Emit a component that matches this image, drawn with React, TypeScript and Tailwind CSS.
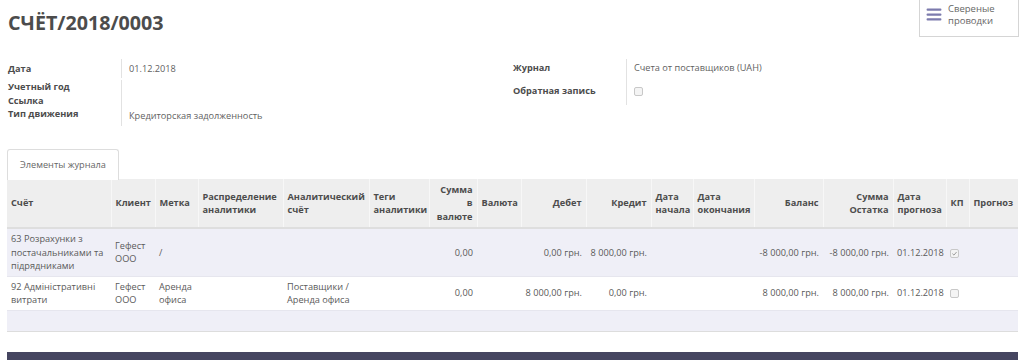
import React from 'react';

type Col = { label: string; width: number; align?: 'right' | 'left' };

const columns: Col[] = [
  { label: 'Счёт', width: 104 },
  { label: 'Клиент', width: 44 },
  { label: 'Метка', width: 43 },
  { label: 'Распределение аналитики', width: 85 },
  { label: 'Аналитический счёт', width: 86 },
  { label: 'Теги аналитики', width: 60 },
  { label: 'Сумма в валюте', width: 48, align: 'right' },
  { label: 'Валюта', width: 44 },
  { label: 'Дебет', width: 65, align: 'right' },
  { label: 'Кредит', width: 65, align: 'right' },
  { label: 'Дата начала', width: 42 },
  { label: 'Дата окончания', width: 61 },
  { label: 'Баланс', width: 69, align: 'right' },
  { label: 'Сумма Остатка', width: 70, align: 'right' },
  { label: 'Дата прогноза', width: 53 },
  { label: 'КП', width: 23 },
  { label: 'Прогноз', width: 49 },
];

type Line = (string | { check: boolean })[];

const rows: Line[] = [
  [
    '63 Розрахунки з постачальниками та підрядниками',
    'Гефест ООО',
    '/',
    '',
    '',
    '',
    '0,00',
    '',
    '0,00 грн.',
    '8 000,00 грн.',
    '',
    '',
    '-8 000,00 грн.',
    '-8 000,00 грн.',
    '01.12.2018',
    { check: true },
    '',
  ],
  [
    '92 Адміністративні витрати',
    'Гефест ООО',
    'Аренда офиса',
    '',
    'Поставщики / Аренда офиса',
    '',
    '0,00',
    '',
    '8 000,00 грн.',
    '0,00 грн.',
    '',
    '',
    '8 000,00 грн.',
    '8 000,00 грн.',
    '01.12.2018',
    { check: false },
    '',
  ],
];

const Checkbox: React.FC<{ checked?: boolean }> = ({ checked }) => (
  <span className="inline-flex h-[9px] w-[9px] items-center justify-center rounded-[2px] border border-[#c8c8c8] bg-[#f4f4f4] align-middle">
    {checked && (
      <svg viewBox="0 0 10 10" className="h-[7px] w-[7px]">
        <path d="M2 5.2 L4.2 7.3 L8 2.8" fill="none" stroke="#9a9a9a" strokeWidth="1.4" />
      </svg>
    )}
  </span>
);

const FieldRow: React.FC<{ label: string; value?: React.ReactNode; className?: string }> = ({
  label,
  value,
  className,
}) => (
  <div className={`flex items-center ${className ?? ''}`}>
    <div className="w-[113px] shrink-0 font-bold text-[#4c4c4c]">{label}</div>
    <div className="flex flex-1 items-center self-stretch border-l border-[#e2e2e2] pl-[7px] text-[#5f5f5f]">
      {value}
    </div>
  </div>
);

export default function App() {
  return (
    <div
      className="relative h-[360px] w-[1024px] overflow-hidden bg-white text-[9.2px] leading-[13.5px] text-[#4c4c4c]"
      style={{ fontFamily: '"Open Sans", "Noto Sans", sans-serif' }}
    >
      <button className="absolute right-[5px] top-[-1px] flex h-[38px] w-[100px] items-start gap-[6px] border border-[#d5d5d5] bg-white pl-[6px] pt-[3px] text-left">
        <svg viewBox="0 0 16 14" className="mt-[5px] h-[13px] w-[16px] shrink-0">
          <rect x="0" y="0.5" width="16" height="2.5" rx="1" fill="#7c7bad" />
          <rect x="0" y="5.8" width="16" height="2.5" rx="1" fill="#7c7bad" />
          <rect x="0" y="11" width="16" height="2.5" rx="1" fill="#7c7bad" />
        </svg>
        <span className="flex flex-col text-[9.5px] leading-[11.5px] text-[#666666]">
          <span>Свереные</span>
          <span>проводки</span>
        </span>
      </button>

      <div className="px-[7px]">
        <h1 className="pl-[1px] pt-[9px] text-[19.7px] font-bold leading-[27px] text-[#4c4c4c]">
          СЧЁТ/2018/0003
        </h1>

        <div className="mt-[23px] flex">
          <div className="w-[506px] pl-[1px]">
            <FieldRow label="Дата" value="01.12.2018" className="h-[19px]" />
            <FieldRow label="Учетный год" className="mt-[2px] h-[13.5px]" />
            <FieldRow label="Ссылка" className="h-[13.5px]" />
            <div className="flex h-[19px]">
              <div className="w-[113px] shrink-0 font-bold text-[#4c4c4c]">Тип движения</div>
              <div className="flex-1 border-l border-[#e2e2e2] pl-[7px] pt-[2px] text-[#5f5f5f]">
                Кредиторская задолженность
              </div>
            </div>
          </div>
          <div className="flex-1">
            <FieldRow label="Журнал" value="Счета от поставщиков (UAH)" className="h-[18px]" />
            <FieldRow label="Обратная запись" value={<Checkbox />} className="h-[28px]" />
          </div>
        </div>

        <div className="mt-[23px] flex">
          <div className="relative z-10 mb-[-1px] flex h-[31px] items-center rounded-t-[3px] border border-b-0 border-[#dddddd] bg-white px-[12px] text-[#666666]">
            Элементы журнала
          </div>
        </div>

        <table className="w-[1011px] table-fixed border-collapse">
          <colgroup>
            {columns.map((c) => (
              <col key={c.label} style={{ width: c.width }} />
            ))}
          </colgroup>
          <thead>
            <tr className="h-[49px] border-b-2 border-[#dedede] bg-[#eeeeee]">
              {columns.map((c, i) => (
                <th
                  key={c.label}
                  className={`px-[4px] align-middle font-bold text-[#4c4c4c] ${
                    c.align === 'right' ? 'text-right' : 'text-left'
                  } ${i > 0 ? 'border-l border-[#f7f7f7]' : ''}`}
                >
                  {c.label}
                </th>
              ))}
            </tr>
          </thead>
          <tbody>
            {rows.map((r, ri) => (
              <tr
                key={ri}
                className={`${ri === 0 ? 'h-[48px] bg-[#efeff7]' : 'h-[34px] bg-white'} border-b border-[#e6e6ee]`}
              >
                {r.map((cell, ci) => (
                  <td
                    key={ci}
                    className={`px-[4px] align-middle text-[#5a5a5a] ${
                      columns[ci].align === 'right' ? 'whitespace-nowrap text-right' : 'text-left'
                    }`}
                  >
                    {typeof cell === 'string' ? cell : <Checkbox checked={cell.check} />}
                  </td>
                ))}
              </tr>
            ))}
            <tr className="h-[21px] border-b border-[#dddddd] bg-[#efeff7]">
              <td colSpan={columns.length} />
            </tr>
          </tbody>
        </table>

        <div className="mt-[20px] h-[10px] w-[1011px] bg-[#454560]" />
      </div>
    </div>
  );
}
